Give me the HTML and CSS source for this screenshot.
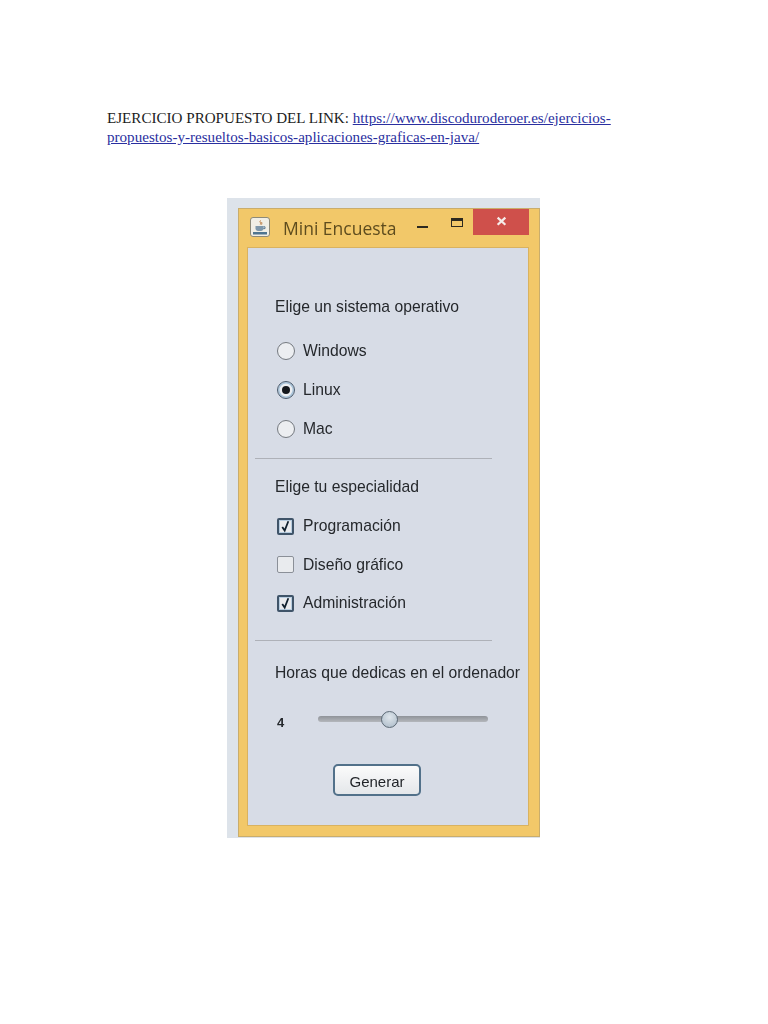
FILE: index.html
```html
<!DOCTYPE html>
<html lang="es">
<head>
<meta charset="utf-8">
<title>Mini Encuesta</title>
<link rel="stylesheet" href="styles.css">
</head>
<body>
<main class="page">
  <p class="intro">EJERCICIO PROPUESTO DEL LINK: <a href="#">https://www.discoduroderoer.es/ejercicios-<br>propuestos-y-resueltos-basicos-aplicaciones-graficas-en-java/</a></p>
  <figure class="shot">
    <div class="window">
      <header class="titlebar">
        <svg class="app-icon" viewBox="0 0 20 20" aria-hidden="true">
          <rect x="0.5" y="0.5" width="19" height="19" rx="2.5" fill="#f1efe6" stroke="#8d8a78"/>
          <path d="M10.500 3.500c-1.600 1.600 1.200 2.300-.2 4M12 5c-1 1 .4 1.500-.4 2.600" fill="none" stroke="#b8763a" stroke-width="1"/>
          <path d="M5.500 9h8v2.500c0 1.600-1.200 2.500-2.500 2.500H8c-1.300 0-2.500-.9-2.500-2.500z" fill="#7f98ab"/>
          <path d="M13.500 9.800h1.500v1.800h-1.700" fill="none" stroke="#5a7a94"/>
          <rect x="3" y="15" width="14" height="2.500" fill="#4f7590"/>
        </svg>
        <span class="title">Mini Encuesta</span>
        <div class="controls">
          <span class="min"></span>
          <span class="max"></span>
          <span class="close">
            <svg viewBox="0 0 10 10" aria-hidden="true"><path d="M1.500 1.500l7 6.500M8.500 1.500l-7 6.500" stroke="#f6ecea" stroke-width="2" fill="none"/></svg>
          </span>
        </div>
      </header>
      <section class="panel">
        <h2 class="label first">Elige un sistema operativo</h2>
        <ul class="options group-one">
          <li class="option"><span class="radio"></span>Windows</li>
          <li class="option"><span class="radio on"></span>Linux</li>
          <li class="option"><span class="radio"></span>Mac</li>
        </ul>
        <hr class="rule rule-one">
        <h2 class="label second">Elige tu especialidad</h2>
        <ul class="options group-two">
          <li class="option"><span class="check on"><svg viewBox="0 0 16 16" aria-hidden="true"><path d="M4 8.500l3 4.500L11.500 1.500" fill="none" stroke="#10202e" stroke-width="2.200"/></svg></span>Programación</li>
          <li class="option"><span class="check"></span>Diseño gráfico</li>
          <li class="option"><span class="check on"><svg viewBox="0 0 16 16" aria-hidden="true"><path d="M4 8.500l3 4.500L11.500 1.500" fill="none" stroke="#10202e" stroke-width="2.200"/></svg></span>Administración</li>
        </ul>
        <hr class="rule rule-two">
        <h2 class="label third">Horas que dedicas en el ordenador</h2>
        <div class="slider-row">
          <span class="value">4</span>
          <div class="track"><span class="thumb"></span></div>
        </div>
        <button class="generate" type="button">Generar</button>
      </section>
    </div>
  </figure>
</main>
</body>
</html>
```
FILE: styles.css
```css
* { box-sizing: border-box; }
html, body { margin: 0; padding: 0; background: #fff; }
.page { width: 768px; height: 1024px; padding-top: 109px; overflow: hidden; }
.intro {
  margin: 0 0 0 107px;
  font: 15.100px/19px "Liberation Serif", serif;
  color: #1c1c1c;
}
.intro a { color: #2a2fa0; text-decoration: underline; }
.shot {
  margin: 51px 0 0 227px;
  width: 313px;
  height: 640px;
  padding: 10px 0 0 11px;
  background: #dde3ea;
  filter: blur(0.45px);
}
.window {
  width: 302px;
  height: 629px;
  background: #f2c869;
  border: 1px solid #c9ad6c;
  padding-left: 8px;
}
.titlebar { display: flex; align-items: flex-start; height: 38px; position: relative; }
.app-icon { width: 20px; height: 20px; margin: 8px 0 0 3px; flex: none; }
.title {
  margin: 8px 0 0 13px;
  font: 17.500px/22px "Open Sans", sans-serif;
  color: #5e4c1e;
  white-space: nowrap;
}
.controls { position: absolute; top: 0; right: 10px; width: 112px; height: 26px; }
.min { position: absolute; left: 0; top: 17px; width: 11px; height: 2px; background: #2d2a20; }
.max { position: absolute; left: 34px; top: 9px; width: 12px; height: 9px; border: 1px solid #2d2a20; border-top-width: 3px; }
.close {
  position: absolute; right: 0; top: 0; width: 56px; height: 26px;
  background: #cf504b;
  display: flex; align-items: center; justify-content: center;
}
.close svg { width: 11px; height: 11px; margin-bottom: 2px; }
.panel {
  width: 282px;
  height: 579px;
  background: #d7dce6;
  border: 1px solid #d9b260;
  padding-left: 27px;
  font: 15.700px/20px "Liberation Sans", sans-serif;
  color: #25282c;
}
.label { margin: 0; font: inherit; height: 20px; white-space: nowrap; }
.first { margin-top: 49px; }
.options { list-style: none; margin: 0; padding: 0; }
.group-one { margin-top: 14px; }
.group-two { margin-top: 10px; }
.group-two .option { height: 38.500px; }
.option { display: flex; align-items: center; height: 39px; gap: 8px; padding-left: 2px; }
.radio {
  width: 18px; height: 18px; border-radius: 50%; flex: none;
  border: 1.500px solid #74797f;
  background: #eceef1;
  display: flex; align-items: center; justify-content: center;
}
.radio.on { border-color: #4a5a6c; box-shadow: inset 0 0 0 1.500px #a9c4da; }
.radio.on::after { content: ""; width: 8px; height: 8px; border-radius: 50%; background: #15181c; }
.check {
  width: 17px; height: 17px; flex: none; border-radius: 2px;
  border: 1.500px solid #8b9098;
  background: #e9ebee;
  margin-right: 1px;
}
.check.on { border: 2px solid #3f5469; box-shadow: inset 0 0 0 1px #b7cde0; }
.check svg { display: block; width: 100%; height: 100%; }
.rule { height: 1px; margin: 0 0 0 -20px; width: 237px; border: 0; background: #aeb1b8; }
.rule-one { margin-top: 10px; }
.second { margin-top: 18px; }
.rule-two { margin-top: 17.500px; }
.third { margin-top: 22px; }
.slider-row { display: flex; align-items: center; height: 30px; margin-top: 21px; }
.value { width: 43px; padding: 8px 0 0 2px; font-weight: bold; font-size: 13px; }
.track {
  position: relative; width: 170px; height: 6px; border-radius: 3px;
  background: linear-gradient(#8f9399, #b4b7bc);
}
.thumb {
  position: absolute; left: 63px; top: -5px; width: 17px; height: 17px; border-radius: 50%;
  border: 1.500px solid #5d6a76;
  background: radial-gradient(circle at 50% 35%, #dfe6ec, #a9b8c6);
}
.generate {
  display: block;
  margin: 30px 0 0 58px;
  width: 88px; height: 32px;
  border: 2px solid #52718a;
  border-radius: 5px;
  padding: 2px 0 0;
  background: linear-gradient(#fbfbfb, #e4e7ea);
  font: 15px "Liberation Sans", sans-serif;
  color: #1f2226;
}
```
